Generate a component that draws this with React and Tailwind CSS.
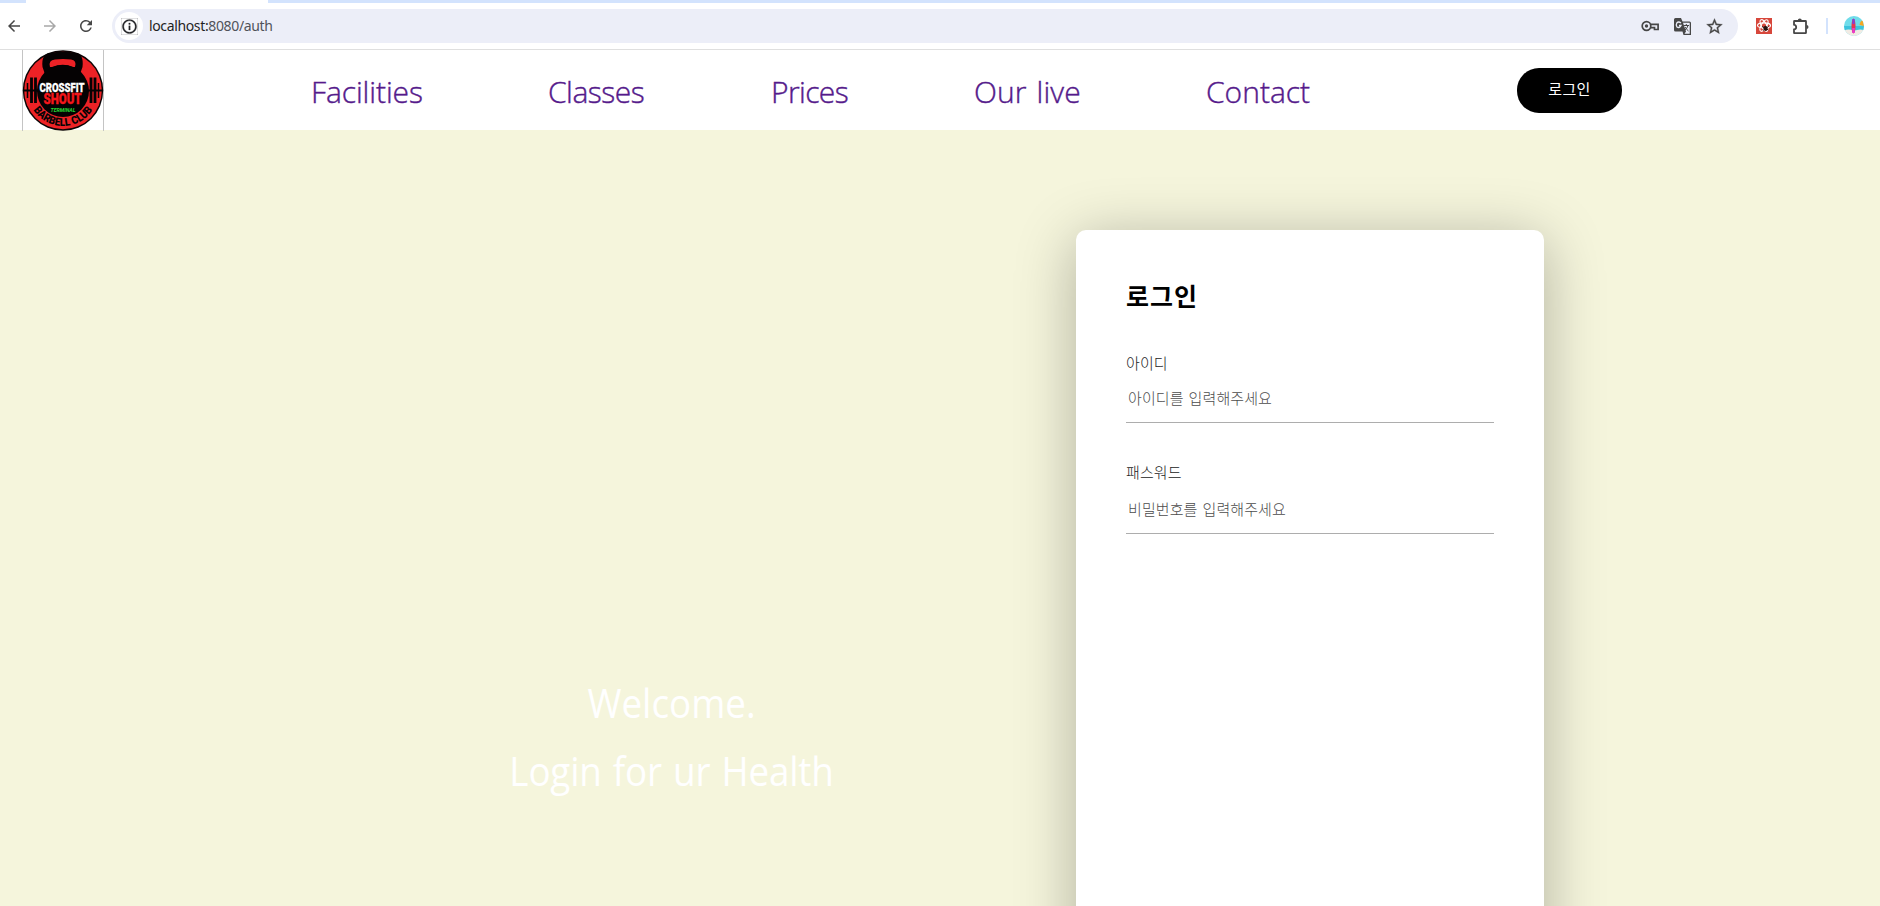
import React from "react";
import { MdArrowBack, MdArrowForward, MdRefresh, MdInfoOutline, MdStarOutline } from "react-icons/md";

const navItems = [
  { label: "Facilities", box: "w-[237px]", text: "tracking-[-0.1px]" },
  { label: "Classes", box: "w-[223px]", text: "tracking-[-0.5px]" },
  { label: "Prices", box: "w-[203px]", text: "tracking-[-0.6px]" },
  { label: "Our live", box: "w-[232px]", text: "tracking-[0.1px] [word-spacing:2px]" },
  { label: "Contact", box: "w-[310px]", text: "tracking-[0px]" },
];

function Logo() {
  return (
    <svg className="block h-[81px] w-[82px]" viewBox="0 0 82 81">
      <defs>
        <path id="club" d="M10.300 58.300 A 35.500 35.500 0 0 0 71.700 58.300" />
      </defs>
      <path d="M.5 0V81M81.500 0V81" stroke="#c4c4c4" shapeRendering="crispEdges" />
      <circle cx="41" cy="40.500" r="40.200" fill="#0b0405" />
      <circle cx="41" cy="40.500" r="38.800" fill="#ed2226" />
      <path d="M24 27 20.500 17Q19 4 28 3Q41 0 54 3Q62 4 60.500 17L57 27Z" fill="#050203" />
      <path d="M28 17Q26 10 33 9.500Q41 8.500 49 9.500Q55 10 53 17L51 17Q41 12.500 30 17Z" fill="#ed2226" />
      <circle cx="41" cy="41" r="26" fill="#050203" />
      <path d="M1 40.500H81" stroke="#050203" strokeWidth="2" />
      <path d="M9.500 27.500V53M13.500 27.500V53M69 27.500V53M73 27.500V53" stroke="#050203" strokeWidth="2.800" />
      <path d="M5.500 33V48M76.500 33V48" stroke="#050203" strokeWidth="1.500" />
      <text x="17.500" y="42" textLength="45" lengthAdjust="spacingAndGlyphs" fontFamily="Roboto" fontWeight="900" fontSize="12" fill="#fff" stroke="#fff" strokeWidth=".3">CROSSFIT</text>
      <text x="21.500" y="53.500" textLength="38" lengthAdjust="spacingAndGlyphs" fontFamily="Roboto" fontWeight="900" fontSize="14.500" fill="#f5161b" stroke="#f5161b" strokeWidth=".4">SHOUT</text>
      <text x="28.500" y="61.500" textLength="25" lengthAdjust="spacingAndGlyphs" fontFamily="Roboto" fontWeight="700" fontStyle="italic" fontSize="6" fill="#27d834">TERMINAL</text>
      <text fontFamily="Roboto" fontWeight="900" fontSize="11" fill="#080304">
        <textPath href="#club" startOffset="2" textLength="70" lengthAdjust="spacingAndGlyphs">BARBELL CLUB</textPath>
      </text>
    </svg>
  );
}

function KeyIcon() {
  return (
    <svg className="h-3 w-[18px]" viewBox="0 0 18 12" fill="none" stroke="#474747" strokeWidth="1.700">
      <circle cx="5.500" cy="6" r="4.300" />
      <circle cx="5.500" cy="6" r="1.700" fill="#474747" stroke="none" />
      <path d="M9.500 4.300H17.100V9.500H13.500V7.700H9.500" />
    </svg>
  );
}

function TranslateIcon() {
  return (
    <svg className="h-[17px] w-[17px]" viewBox="0 0 17 17">
      <path d="M1.500 0H7L8.500 3.500H15.500Q17 3.500 17 5V17H9.500L8.500 13.500H1.500Q0 13.500 0 12V1.500Q0 0 1.500 0Z" fill="#474747" />
      <path d="M9 4.800H15.700V15.700H10.500L12 13.500Z" fill="#eceef8" />
      <path d="M7 5Q4.500 3 2.800 5Q1.500 7 3 9Q5.500 10.500 7 7.500H5" stroke="#eceef8" strokeWidth="1.300" fill="none" />
      <path d="M9.800 7.500H15M12.300 6V7.500M14 7.500Q13 11 10.500 12.500M11 9Q12.500 11.500 14.500 13" stroke="#474747" fill="none" />
    </svg>
  );
}

function ReactExtensionIcon() {
  return (
    <svg className="h-4 w-4" viewBox="0 0 16 16">
      <path d="M0 0H16V16H0Z" fill="#d7473b" />
      <g fill="none" stroke="#fff" strokeWidth="1.100">
        <ellipse cx="8" cy="7.500" rx="6.500" ry="2.600" />
        <ellipse cx="8" cy="7.500" rx="6.500" ry="2.600" transform="rotate(60 8 7.500)" />
        <ellipse cx="8" cy="7.500" rx="6.500" ry="2.600" transform="rotate(120 8 7.500)" />
      </g>
      <ellipse cx="9.500" cy="10.300" rx="2" ry="2.600" fill="#26120f" />
      <path d="M6 8.500 12.500 12M12.500 8.500 7 12.500" stroke="#26120f" />
    </svg>
  );
}

function PuzzleIcon() {
  return (
    <svg className="h-[17px] w-[17px]" viewBox="0 0 17 17">
      <path d="M2.500 3H13.500Q14 3 14 3.500V14.700Q14 15.200 13.500 15.200H2.500Q2 15.200 2 14.700V11.500Q4.200 11 4.200 9.200Q4.200 7.200 2 6.700V3.500Q2 3 2.500 3Z" fill="none" stroke="#474747" strokeWidth="1.800" />
      <path d="M5.800 2.500A2 2 0 0 1 9.800 2.500ZM14.500 7A2 2 0 0 1 14.500 11Z" fill="#474747" />
    </svg>
  );
}

function Avatar() {
  return (
    <svg className="h-5 w-5" viewBox="0 0 20 20">
      <defs>
        <clipPath id="face"><circle cx="10" cy="10" r="10" /></clipPath>
      </defs>
      <g clipPath="url(#face)">
        <path d="M0 0H20V20H0Z" fill="#6fdcea" />
        <path d="M0 10H20V14H0Z" fill="#3cc3dd" />
        <path d="M0 14.500Q5 12.500 10 15Q15 12.500 20 14V20H0Z" fill="#f1ebe4" />
        <path d="M15.500 9Q16 5 19 4L20 10Z" fill="#f6a623" />
        <ellipse cx="9.500" cy="10" rx="2" ry="7.500" fill="#e9344f" />
        <path d="M9.500 3V8" stroke="#7b3fe0" strokeWidth="2.200" />
        <path d="M9.500 12V17" stroke="#e83bd0" strokeWidth="2.500" />
      </g>
    </svg>
  );
}

function BrowserBar() {
  return (
    <div className="h-[50px] shrink-0 border-b border-[#dfdfdf] bg-white">
      <div className="flex h-[3px] bg-[#d3e3fd]">
        <div className="ml-[26px] h-[3px] w-[242px] bg-white" />
      </div>
      <div className="flex h-[46px] items-center">
        <MdArrowBack className="ml-[5px] size-[18px] text-[#474747]" />
        <MdArrowForward className="ml-[18px] size-[18px] text-[#a8a8a8]" />
        <MdRefresh className="ml-[18px] size-[18px] text-[#474747]" />
        <div className="ml-[17px] flex h-[34px] w-[1626px] items-center rounded-full bg-[#eceef8]">
          <div className="ml-[3px] flex size-7 items-center justify-center rounded-full bg-white">
            <MdInfoOutline className="size-[17px] stroke-[#202124] stroke-[0.4] text-[#202124]" />
          </div>
          <span className="ml-[6px] font-['Noto_Sans','Noto_Sans_CJK_KR',sans-serif] text-sm tracking-[-0.36px] text-[#50535a]">
            <span className="text-[#1f1f1f]">localhost:</span>8080/auth
          </span>
          <div className="ml-auto flex items-center pr-[14px]">
            <KeyIcon />
            <div className="ml-[15px]"><TranslateIcon /></div>
            <MdStarOutline className="ml-[14px] size-[19px] stroke-[#474747] stroke-[0.4] text-[#474747]" />
          </div>
        </div>
        <div className="ml-[18px]"><ReactExtensionIcon /></div>
        <div className="ml-5"><PuzzleIcon /></div>
        <div className="ml-[17px] h-4 w-[2px] bg-[#d3e3fd]" />
        <div className="ml-4"><Avatar /></div>
      </div>
    </div>
  );
}

function Field({ id, label, type, placeholder, className }) {
  return (
    <div className={className}>
      <label htmlFor={id} className="block text-[15px] leading-5 font-light tracking-[0.1px] text-[#222222]">{label}</label>
      <input id={id} type={type} placeholder={placeholder} className="block w-full border-b border-[#adadad] px-[2px] text-[15px] font-light tracking-[0.1px] outline-none [word-spacing:1px] placeholder:text-[#4c4c4c]" />
    </div>
  );
}

export default function App() {
  return (
    <div className="flex h-screen flex-col overflow-hidden bg-[#f5f5dc] font-['Open_Sans','Noto_Sans_CJK_KR',sans-serif]">
      <BrowserBar />
      <header className="flex h-20 shrink-0 bg-white">
        <div className="ml-[22px] h-[81px] w-[82px]"><Logo /></div>
        <nav className="ml-[207px] flex pt-[19px]">
          {navItems.map((item) => (
            <a key={item.label} href="#" className={`${item.box} text-[30px] leading-[46px] font-light whitespace-nowrap text-[#551a8b] [-webkit-text-stroke:0.4px_#551a8b]`}>
              <span className={item.text}>{item.label}</span>
            </a>
          ))}
        </nav>
        <button className="mt-[18px] ml-px h-[45px] w-[105px] rounded-[22px] bg-black pb-[3px] text-[15px] tracking-[0.3px] text-white">로그인</button>
      </header>
      <main className="flex flex-1">
        <div className="ml-[509px] flex w-[325px] scale-x-[0.92] flex-col items-center pt-[539px] text-[40px] leading-[68px] whitespace-nowrap text-white [word-spacing:2px]">
          <p>Welcome.</p>
          <p className="tracking-[-0.2px]">Login for ur Health</p>
        </div>
        <form className="mt-[100px] ml-[242px] h-[800px] w-[468px] rounded-[10px] bg-white px-[50px] pt-[49px] shadow-[0_10px_60px_rgba(0,0,0,0.29)]">
          <h1 className="text-[25px] leading-[34px] font-bold tracking-[1px]">로그인</h1>
          <Field id="user" label="아이디" type="text" placeholder="아이디를 입력해주세요" className="mt-[40px] [&>input]:mt-[2px] [&>input]:h-[48px] [&>input]:pb-px" />
          <Field id="password" label="패스워드" type="password" placeholder="비밀번호를 입력해주세요" className="mt-[39px] [&>input]:mt-[3px] [&>input]:h-[49px] [&>input]:pb-0" />
        </form>
      </main>
    </div>
  );
}
